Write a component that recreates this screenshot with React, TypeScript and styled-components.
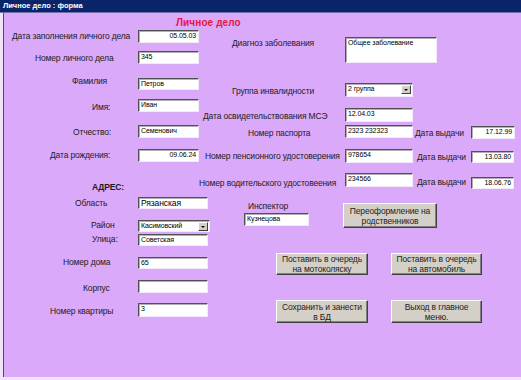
import React from "react";
import styled, {createGlobalStyle} from "styled-components";

const GlobalStyle = createGlobalStyle`
  html, body {
    margin: 0;
    padding: 0;
  }
  body {
    width: 521px;
    height: 380px;
    overflow: hidden;
    font-family: "Liberation Sans", Arial, sans-serif;
  }
`

const Window = styled.div`
  width: 521px;
  height: 380px;
  display: flex;
  flex-direction: column;
  background: #f1e4f8;
`
const TitleBar = styled.div`
  height: 12px;
  line-height: 12px;
  padding-left: 3px;
  background: #0a246a;
  border-bottom: 1px solid #7070a8;
  color: #ffffff;
  font-size: 7.5px;
  font-weight: bold;
`
const Body = styled.div`
  flex: 1;
  margin: 0 0 3px 3px;
  border-left: 1px solid #505050;
  background: #daa9f9;
  color: #1c1c1c;
  font-size: 8.5px;
  letter-spacing: -0.15px;
`
const Heading = styled.div`
  height: 12px;
  padding: 4px 0 0 172px;
  line-height: 12px;
  font-size: 10px;
  font-weight: bold;
  letter-spacing: 0.1px;
  color: #e5173f;
`
const Columns = styled.div`
  display: flex;
`
const LeftCol = styled.div`
  width: 194px;
  flex-shrink: 0;
  display: flex;
  flex-direction: column;
`
const RightCol = styled.div`
  flex: 1;
  display: flex;
  flex-direction: column;
`
const Row = styled.div<{ $h: number; $mt?: number; $cols?: string }>`
  display: grid;
  grid-template-columns: ${({$cols}) => $cols || '134px auto'};
  align-items: start;
  height: ${({$h}) => $h}px;
  margin-top: ${({$mt}) => $mt || 0}px;
`
const Label = styled.div<{ $x?: number; $dy?: number; $bold?: boolean }>`
  padding-left: ${({$x}) => $x || 0}px;
  margin-top: ${({$dy}) => $dy || 0}px;
  line-height: 11px;
  white-space: nowrap;
  font-weight: ${({$bold}) => $bold ? 'bold' : 'normal'};
`
const Field = styled.div<{ $w: number; $h: number; $dy?: number; $right?: boolean; $fs?: number }>`
  box-sizing: border-box;
  width: ${({$w}) => $w}px;
  height: ${({$h}) => $h}px;
  margin-top: ${({$dy}) => $dy || 0}px;
  padding: 0 2px;
  background: #ffffff;
  border: 1px solid;
  border-color: #505050 #f3e9fb #f3e9fb #505050;
  box-shadow: inset 1px 1px 0 #b0b0b0;
  color: #000000;
  font-size: ${({$fs}) => $fs || 7}px;
  letter-spacing: -0.1px;
  line-height: 10px;
  text-align: ${({$right}) => $right ? 'right' : 'left'};
  white-space: pre-wrap;
  overflow: hidden;
`
const Combo = styled(Field)`
  display: flex;
  padding-right: 1px;
  white-space: nowrap;
`
const ComboText = styled.span`
  flex: 1;
`
const ComboArrow = styled.span`
  box-sizing: border-box;
  width: 10px;
  height: 9px;
  margin-top: 1px;
  background: #d4d0c8;
  border: 1px solid;
  border-color: #ffffff #404040 #404040 #ffffff;
  display: flex;
  align-items: center;
  justify-content: center;

  &::after {
    content: "";
    border-left: 2px solid transparent;
    border-right: 2px solid transparent;
    border-top: 2px solid #000000;
  }
`
const Inspector = styled.div`
  display: flex;
  flex-direction: column;
  margin-left: 46px;
  width: 65px;
`
const ButtonRow = styled.div<{ $h: number; $mt?: number; $x: number; $gap: number }>`
  display: flex;
  align-items: flex-start;
  gap: ${({$gap}) => $gap}px;
  height: ${({$h}) => $h}px;
  margin-top: ${({$mt}) => $mt || 0}px;
  padding-left: ${({$x}) => $x}px;
`
const Button = styled.button<{ $w: number; $h: number; $dy?: number }>`
  box-sizing: border-box;
  width: ${({$w}) => $w}px;
  height: ${({$h}) => $h}px;
  margin-top: ${({$dy}) => $dy || 0}px;
  padding: 0;
  background: #d4d0c8;
  border: 1px solid;
  border-color: #ffffff #404040 #404040 #ffffff;
  box-shadow: inset -1px -1px 0 #808080;
  color: #222222;
  font-family: "Liberation Sans", Arial, sans-serif;
  font-size: 8.5px;
  letter-spacing: -0.15px;
  line-height: 10px;
  text-align: center;
  white-space: nowrap;
`

const App = () => {
    return (<Window>
        <GlobalStyle/>
        <TitleBar>Личное дело : форма</TitleBar>
        <Body>
            <Heading>Личное дело</Heading>
            <Columns>
                <LeftCol>
                    <Row $mt={1} $h={21}>
                        <Label $x={8} $dy={1}>Дата заполнения личного дела</Label>
                        <Field $w={61} $h={13} $right>05.05.03</Field>
                    </Row>
                    <Row $h={27}>
                        <Label $x={31} $dy={2}>Номер личного дела</Label>
                        <Field $w={61} $h={13}>345</Field>
                    </Row>
                    <Row $h={21}>
                        <Label $x={68} $dy={-2}>Фамилия</Label>
                        <Field $w={61} $h={12}>Петров</Field>
                    </Row>
                    <Row $h={26}>
                        <Label $x={88} $dy={3}>Имя:</Label>
                        <Field $w={61} $h={13}>Иван</Field>
                    </Row>
                    <Row $h={24}>
                        <Label $x={69} $dy={2}>Отчество:</Label>
                        <Field $w={61} $h={13}>Семенович</Field>
                    </Row>
                    <Row $h={33}>
                        <Label $x={46} $dy={1}>Дата рождения:</Label>
                        <Field $w={61} $h={13} $right>09.06.24</Field>
                    </Row>
                    <Row $h={15} $cols="134px">
                        <Label $x={88} $bold>АДРЕС:</Label>
                    </Row>
                    <Row $h={23}>
                        <Label $x={71} $dy={1}>Область</Label>
                        <Field $w={70} $h={12} $fs={8.5}>Рязанская</Field>
                    </Row>
                    <Row $h={14}>
                        <Label $x={87} $dy={0}>Район</Label>
                        <Combo $w={72} $h={12}>
                            <ComboText>Касимовский</ComboText>
                            <ComboArrow/>
                        </Combo>
                    </Row>
                    <Row $h={23}>
                        <Label $x={88} $dy={0}>Улица:</Label>
                        <Field $w={70} $h={12}>Советская</Field>
                    </Row>
                    <Row $h={23}>
                        <Label $x={59} $dy={0}>Номер дома</Label>
                        <Field $w={70} $h={12}>65</Field>
                    </Row>
                    <Row $h={23}>
                        <Label $x={79} $dy={3}>Корпус</Label>
                        <Field $w={70} $h={13}/>
                    </Row>
                    <Row $h={20}>
                        <Label $x={46} $dy={3}>Номер квартиры</Label>
                        <Field $w={70} $h={14}>3</Field>
                    </Row>
                </LeftCol>
                <RightCol>
                    <Row $mt={8} $h={46} $cols="147px auto">
                        <Label $x={34} $dy={1}>Диагноз заболевания</Label>
                        <Field $w={92} $h={26}>Общее заболевание</Field>
                    </Row>
                    <Row $h={25} $cols="147px auto">
                        <Label $x={34} $dy={3}>Группа инвалидности</Label>
                        <Combo $w={68} $h={14}>
                            <ComboText>2 группа</ComboText>
                            <ComboArrow/>
                        </Combo>
                    </Row>
                    <Row $h={17} $cols="147px auto">
                        <Label $x={5} $dy={3}>Дата освидетельствования МСЭ</Label>
                        <Field $w={68} $h={14}>12.04.03</Field>
                    </Row>
                    <Row $h={24} $cols="147px 68px 58px 44px">
                        <Label $x={50} $dy={3}>Номер паспорта</Label>
                        <Field $w={68} $h={13}>2323 232323</Field>
                        <Label $x={2} $dy={3}>Дата выдачи</Label>
                        <Field $w={44} $h={13} $dy={1} $right>17.12.99</Field>
                    </Row>
                    <Row $h={24} $cols="147px 68px 58px 44px">
                        <Label $x={7} $dy={2}>Номер пенсионного удостоверения</Label>
                        <Field $w={68} $h={14}>978654</Field>
                        <Label $x={4} $dy={3}>Дата выдачи</Label>
                        <Field $w={43} $h={12} $dy={2} $right>13.03.80</Field>
                    </Row>
                    <Row $h={28} $cols="147px 68px 58px 44px">
                        <Label $x={1} $dy={5}>Номер водительского удостовеения</Label>
                        <Field $w={68} $h={14}>234566</Field>
                        <Label $x={4} $dy={4}>Дата выдачи</Label>
                        <Field $w={43} $h={12} $dy={4} $right>18.06.76</Field>
                    </Row>
                    <ButtonRow $h={52} $x={0} $gap={34}>
                        <Inspector>
                            <Label $x={4}>Инспектор</Label>
                            <Field $w={65} $h={13} $dy={1}>Кузнецова</Field>
                        </Inspector>
                        <Button $w={94} $h={25} $dy={2}>Переоформление на<br/>родственников</Button>
                    </ButtonRow>
                    <ButtonRow $h={47} $x={78} $gap={23}>
                        <Button $w={92} $h={22}>Поставить в очередь<br/>на мотоколяску</Button>
                        <Button $w={91} $h={22}>Поставить в очередь<br/>на автомобиль</Button>
                    </ButtonRow>
                    <ButtonRow $h={23} $x={78} $gap={23}>
                        <Button $w={92} $h={23}>Сохранить и занести<br/>в БД</Button>
                        <Button $w={91} $h={23}>Выход в главное<br/>меню.</Button>
                    </ButtonRow>
                </RightCol>
            </Columns>
        </Body>
    </Window>)
}

export default App
